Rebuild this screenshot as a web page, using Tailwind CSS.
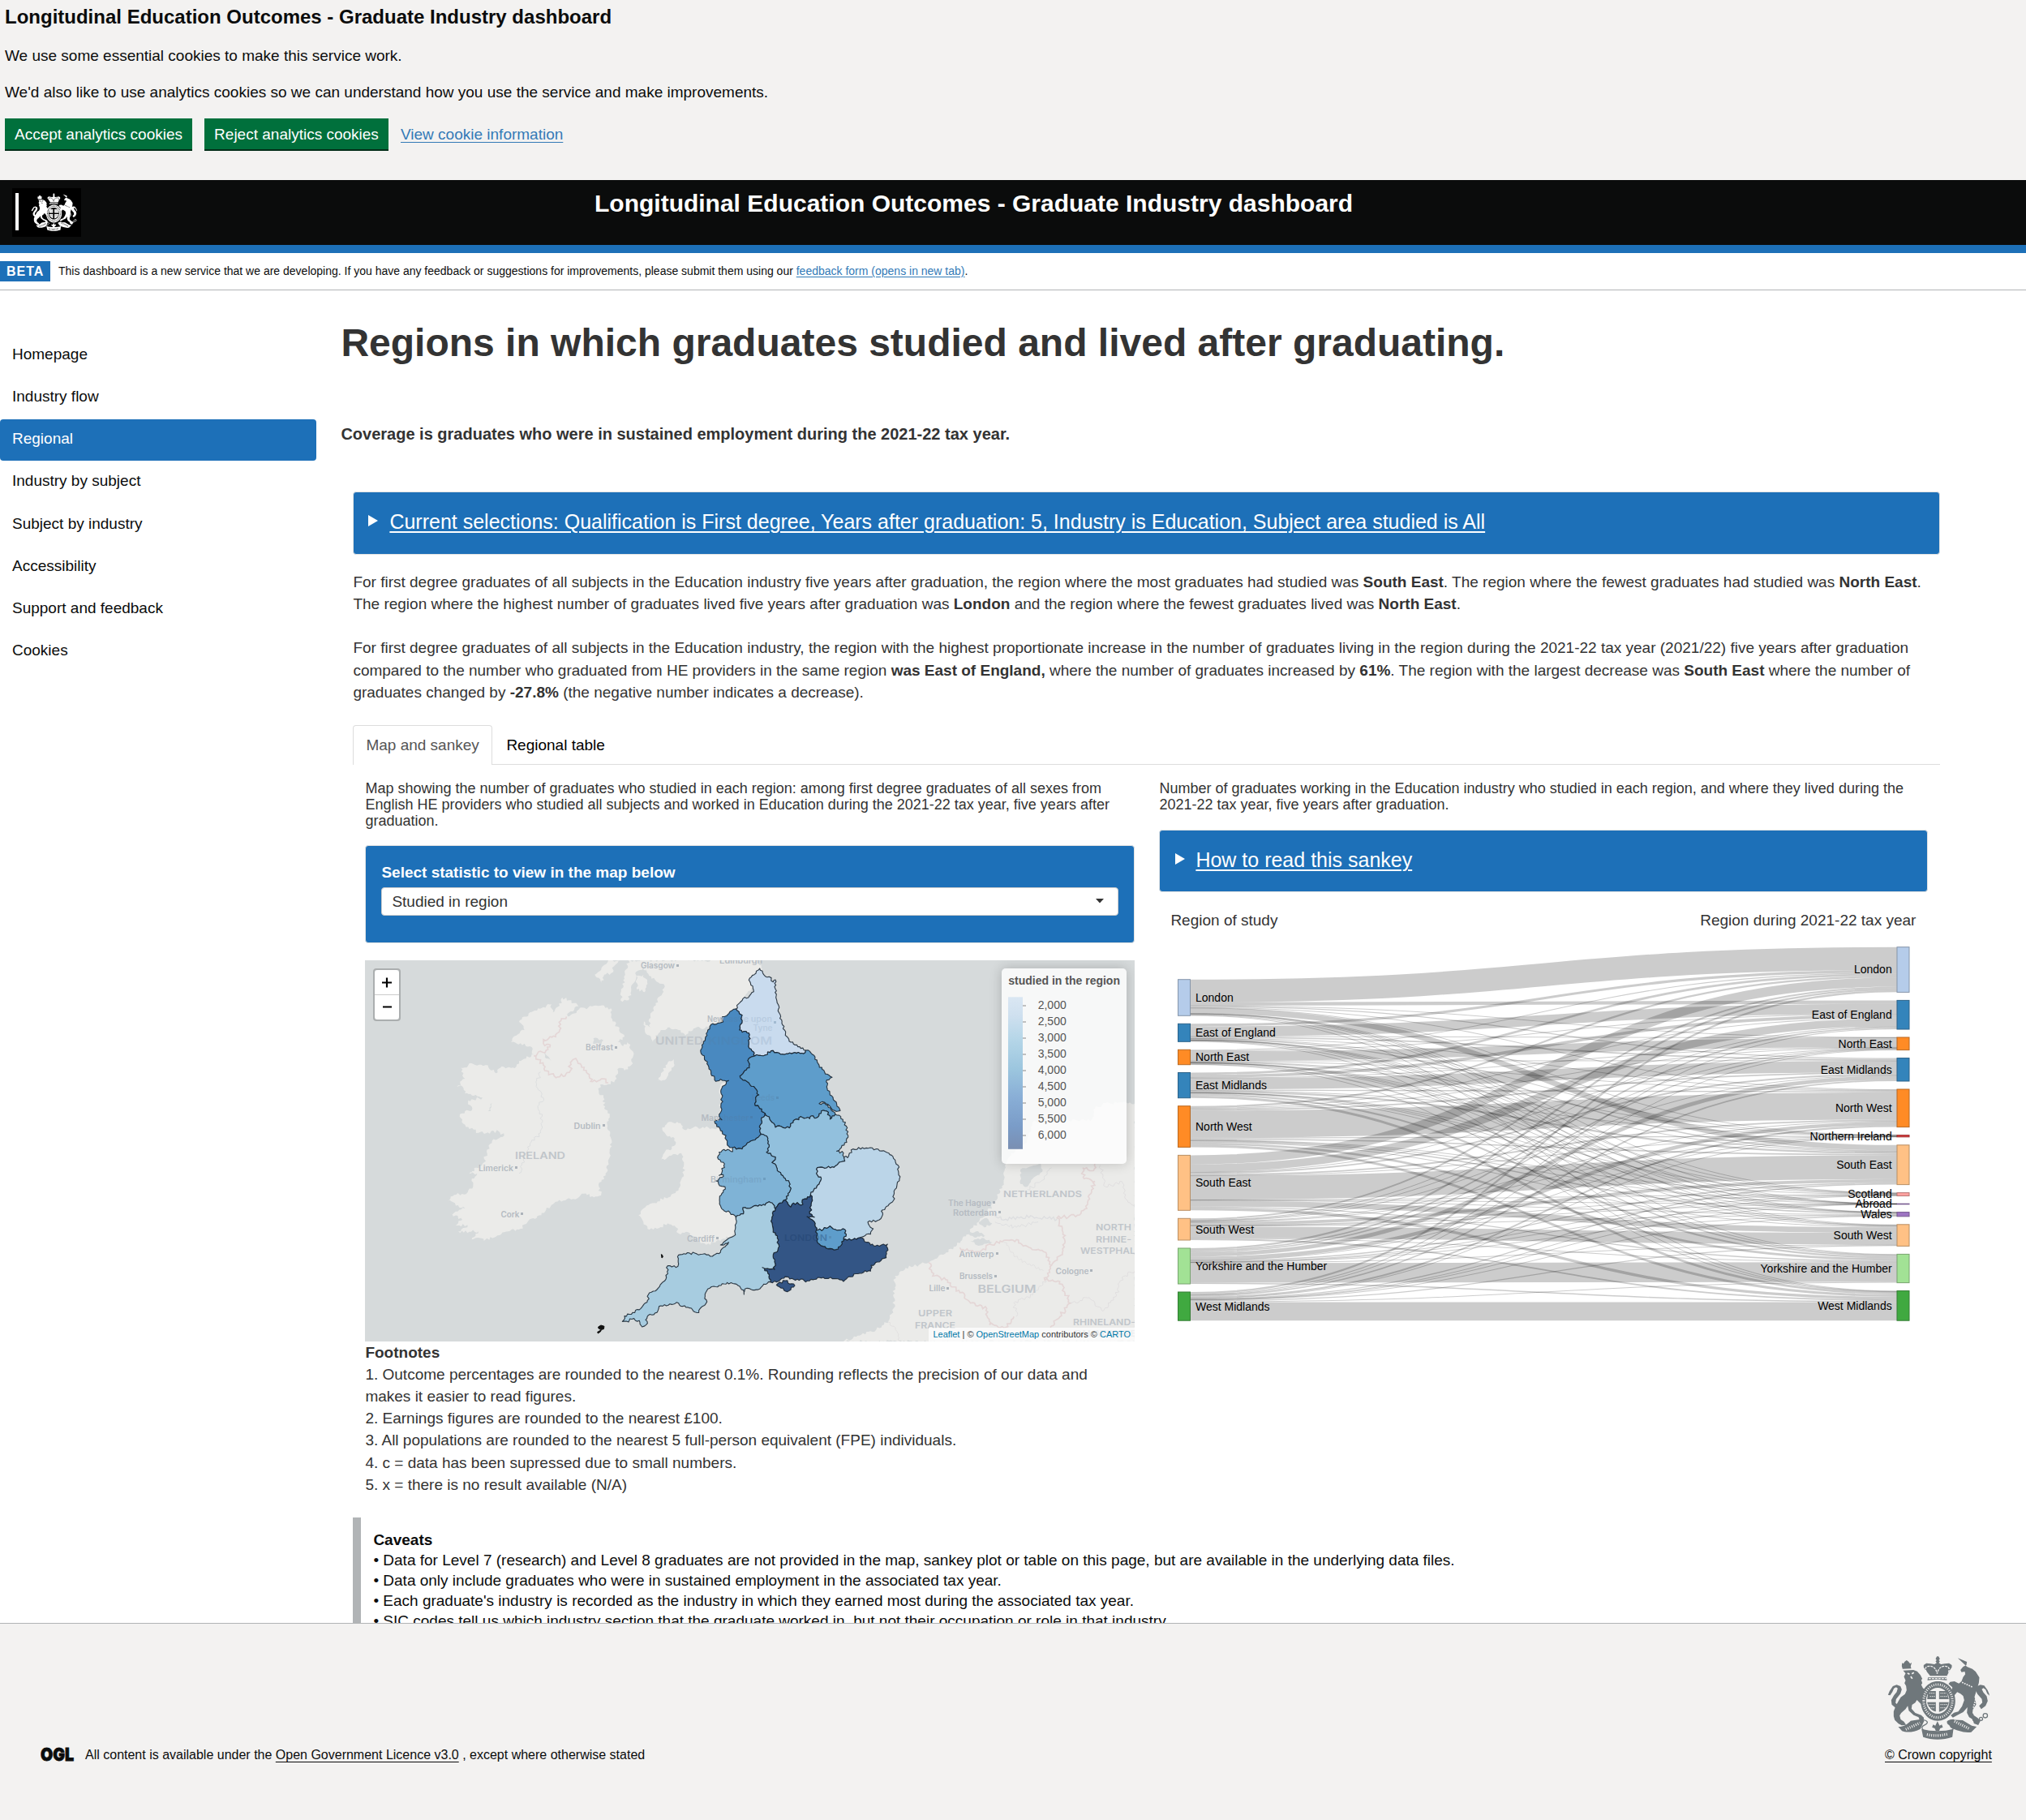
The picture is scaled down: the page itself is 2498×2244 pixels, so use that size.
<!DOCTYPE html>
<html lang="en">
<head>
<meta charset="utf-8">
<title>Longitudinal Education Outcomes - Graduate Industry dashboard</title>
<script src="https://cdn.jsdelivr.net/npm/@tailwindcss/browser@4"></script>
</head>
<body class="h-[2244px] w-[2498px] overflow-hidden bg-white font-['Liberation_Sans',Arial,sans-serif] text-[19px] leading-[27.14px] text-[#333]">

<svg class="hidden">
  <symbol id="crest" viewBox="232 122 380 312">
    <g fill="currentColor" stroke="none">
      <path d="M286 150l5 3 5-8 7-5 7 5 6 8 6-5-4 14 2 9-32 1-3-10zM290 178l38-2 14 5 12 14 7 14-4 4 4 12-4 6 6 12 10 8-2 14-12 8 2 14 8 14-6 8-10-10-12-12-6 10-12 8-2 14 14 16 22 8 10 10-2 12-14-4-4-10-18-8-18-16-4-18-8 12-16 14-6 10 4 14 12 8 8 12-16 2-12-6-14-14-4-14 0-18 8-20 10-18 8-14 16-12 6-14-2-16-6-10 4-10-6-14 6-12z"/>
      <path d="M234 268l6-14 12-18 14-5 14 5 5 12-5 16-16 20-2 14 10 8 12 6-4 8-18-4-14-12-2-16 10-18 10-12 4-14-6-4-8 4-6 14-8 12z"/>
      <path d="M374 178l-8-12 0-8 10-7 16 2 14 2 8-5-4-6 4-4-4-5 5-9h6l5 9-4 5 4 4-4 6 8 5 14-2 16-2 10 7 0 8-8 12-10 20h-62zM382 204h68l2 10-36-3-36 3z"/>
      <path d="M492 132l34 32 20 8 12 10 14 22-2 20-8 26-8 26 4 14 2 14-12 18-2 18 20 14 10 10-8 16-16-6-4-14-14-10-8-16 2-20-16 18-16 8-22 12-8-8 12-10 16-4 14-20 8-22-4-16-10-8-12-6-14 16-6-16 2-18-14-12 6-8 16-2 16 8 10-8 6-16 8-10-2-10-12 2-4-8 10-12 12-6 2-12z"/>
      <path d="M608 264l-6-14-12-16-14-3-14 6-5 12 8 16 16 18 2 14-12 12 8 12 16-12 8-18-4-18-12-14-6-12 6-4 8 6 6 14 8 8z"/>
      <path fill-rule="evenodd" d="M418 218c36 0 65 32 65 72s-29 74-65 74-63-34-63-74 27-72 63-72zm0 24c-24 0-43 21-43 47s19 49 43 49 43-23 43-49-19-47-43-47z"/>
      <path d="M383 254h28v30h-32zM423 254h28l8 30h-36zM379 295h32v35c-18-5-29-19-32-35zM423 295h36c-3 16-16 32-36 36z"/>
      <path d="M272 386c22 0 34-10 46-22l38-6 12 6-14 30c-24 14-54 14-68 8zM452 366l16-6 42 2 34 20 18 4-20 20c-26 4-54-6-76-16zM358 394c36 10 84 10 118 0l-4 30c-34 12-76 12-108 0z"/>
      <path d="M417 366l8 16 8-4 4 10-10 4-4 10h-12l-4-10-10-4 4-10 8 4z"/>
    </g>
    <g fill="none" stroke="currentColor" stroke-width="4">
      <path d="M356 360c24 0 30 12 16 18s-16 12-6 22M478 360c-26 0-30 12-16 18s16 12 10 22"/>
      <circle cx="542" cy="344" r="7"/><circle cx="554" cy="358" r="6"/><circle cx="578" cy="357" r="6"/><circle cx="594" cy="345" r="8"/>
    </g>
    <g fill="none" stroke="var(--gap,#f3f2f1)" stroke-width="4">
      <path d="M376 184q-10-22 12-22t28 28q6-28 28-28t14 22M384 208h66" stroke-dasharray="9 3"/>
      <path d="M366 290c0-33 22-60 52-60s54 27 54 60-24 62-54 62-52-29-52-62" stroke-width="9" stroke-dasharray="3 5"/>
      <path d="M300 396l52-24M378 415c28 6 54 4 76-2M480 366l56 28" stroke-width="10" stroke-dasharray="3 5"/>
      <path d="M387 262h22M389 274h20M428 262h22M428 274h26M384 304h24M387 316h20M428 304h26M428 316h20" stroke-width="3" stroke-dasharray="4 3"/>
      <path d="M508 222l40 18M560 276l-10 40" stroke-width="5" stroke-dasharray="5 4"/>
      <path d="M306 188l8 4M322 190l8-4M318 200l6 8" stroke-width="5"/>
    </g>
  </symbol>
</svg>

<section class="flex h-[222px] flex-col bg-[#f3f2f1] px-[6px] pt-[6px] leading-[25px] text-[#0b0c0c]">
  <h2 class="text-[24px] leading-[30px] font-bold">Longitudinal Education Outcomes - Graduate Industry dashboard</h2>
  <p class="mt-5">We use some essential cookies to make this service work.</p>
  <p class="mt-5">We'd also like to use analytics cookies so we can understand how you use the service and make improvements.</p>
  <div class="mt-5 flex gap-[15px]">
    <button class="h-10 w-[231px] border-b-2 border-[#002d18] bg-[#00703c] text-white">Accept analytics cookies</button>
    <button class="h-10 w-[227px] border-b-2 border-[#002d18] bg-[#00703c] text-white">Reject analytics cookies</button>
    <a class="pt-[7px] text-[#337ab7] underline decoration-1 underline-offset-[3px]">View cookie information</a>
  </div>
</section>

<header class="flex h-[90px] border-b-[10px] border-[#1d70b8] bg-[#0b0c0c] pt-[10px] pl-[15px]">
  <div class="flex h-[60px] w-[85px] bg-black pt-[6px] pl-[4px] text-white [--gap:#000]">
    <div class="h-[46px] w-[4px] bg-white"></div>
    <svg class="ml-[13px] h-[47px] w-[62px]" preserveAspectRatio="none" viewBox="0 0 62 47"><use href="#crest" width="62" height="47"/></svg>
  </div>
  <h1 class="-mt-px ml-[633px] text-[30px] leading-[40px] font-bold text-white">Longitudinal Education Outcomes - Graduate Industry dashboard</h1>
</header>

<div class="flex h-[46px] items-start border-b border-[#b1b4b6] pt-[10px] text-[14px] leading-[25px] text-[#0b0c0c]">
  <strong class="h-[25px] w-[62px] bg-[#1d70b8] pl-[8px] text-[16px] tracking-[1px] text-white">BETA</strong>
  <p class="ml-[10px]">This dashboard is a new service that we are developing. If you have any feedback or suggestions for improvements, please submit them using our <a class="text-[#337ab7] underline underline-offset-2">feedback form (opens in new tab)</a>.</p>
</div>

<div class="flex h-[1643px] overflow-hidden">
  <nav class="mt-[55px] flex w-[390px] shrink-0 flex-col gap-[1.14px] text-[#0b0c0c]">
    <a class="h-[51px] px-[15px] pt-[10px]">Homepage</a>
    <a class="h-[51px] px-[15px] pt-[10px]">Industry flow</a>
    <a class="h-[51px] rounded bg-[#1d70b8] px-[15px] pt-[10px] text-white">Regional</a>
    <a class="h-[51px] px-[15px] pt-[10px]">Industry by subject</a>
    <a class="h-[51px] px-[15px] pt-[10px]">Subject by industry</a>
    <a class="h-[51px] px-[15px] pt-[10px]">Accessibility</a>
    <a class="h-[51px] px-[15px] pt-[10px]">Support and feedback</a>
    <a class="h-[51px] px-[15px] pt-[10px]">Cookies</a>
  </nav>

  <main class="ml-[30.4px] flex w-[1986px] shrink-0 flex-col pt-[38px]">
    <h1 class="text-[48px] leading-[53px] font-bold">Regions in which graduates studied and lived after graduating.</h1>
    <p class="mt-[73px] text-[20px] leading-[27px] font-bold">Coverage is graduates who were in sustained employment during the 2021-22 tax year.</p>

    <div class="mt-[57px] ml-[15px] flex w-[1957px] flex-col">
      <div class="flex h-[78px] rounded border border-[#e3e3e3] bg-[#1d70b8] pt-[19px] pl-[18px] text-white">
        <svg class="mt-[9px] h-[14px] w-[13px]" viewBox="0 0 13 14"><path d="M0 0L12 7L0 14Z" fill="#fff"/></svg>
        <span class="ml-[13px] text-[25px] leading-[34px] underline decoration-2 underline-offset-[3px]">Current selections: Qualification is First degree, Years after graduation: 5, Industry is Education, Subject area studied is All</span>
      </div>
      <p class="mt-5">For first degree graduates of all subjects in the Education industry five years after graduation, the region where the most graduates had studied was <b>South East</b>. The region where the fewest graduates had studied was <b>North East</b>.<br>The region where the highest number of graduates lived five years after graduation was <b>London</b> and the region where the fewest graduates lived was <b>North East</b>.<br><br>For first degree graduates of all subjects in the Education industry, the region with the highest proportionate increase in the number of graduates living in the region during the 2021-22 tax year (2021/22) five years after graduation<br>compared to the number who graduated from HE providers in the same region <b>was East of England,</b> where the number of graduates increased by <b>61%</b>. The region with the largest decrease was <b>South East</b> where the number of<br>graduates changed by <b>-27.8%</b> (the negative number indicates a decrease).</p>

      <div class="mt-[27px] flex h-[49px] shrink-0 border-b border-[#ddd]">
        <div class="-mb-px w-[172px] rounded-t border border-b-0 border-[#ddd] bg-white pt-[10px] pl-[15px] text-[#555]">Map and sankey</div>
        <div class="pt-[11px] pl-[17px] text-black">Regional table</div>
      </div>

      <div class="flex gap-[30px] pt-[19px] pl-[15px]">
        <section class="w-[949px] shrink-0">
          <p class="text-[18px] leading-5">Map showing the number of graduates who studied in each region: among first degree graduates of all sexes from<br>English HE providers who studied all subjects and worked in Education during the 2021-22 tax year, five years after<br>graduation.</p>
          <div class="mt-5 h-[121px] rounded border border-[#e3e3e3] bg-[#1d70b8] px-[19px] pt-[19px]">
            <label class="block leading-[27px] font-bold text-white">Select statistic to view in the map below</label>
            <div class="mt-[5px] flex h-[35px] items-center justify-between rounded border border-[#ccc] bg-white pr-[17px] pl-[12px]">
              <span>Studied in region</span>
              <svg class="h-[6px] w-[10px]" viewBox="0 0 10 6"><path d="M0 0H10L5 5.5Z" fill="#333"/></svg>
            </div>
          </div>

          <div class="relative mt-[21px] h-[470px] w-[949px] overflow-hidden bg-[#d6dadb]">
            <svg class="block h-[470px] w-[949px]" viewBox="0 0 949 470" id="map">
              <g id="land" transform="translate(-10 -14) scale(.33333)"></g>
              <g id="england" transform="translate(450 -14) scale(.33333)"></g>
              <g id="places" font-family="Inter, sans-serif"></g>
            </svg>
            <div class="absolute top-[10px] left-[10px] h-[65px] w-[34px] rounded border-2 border-black/20 bg-clip-padding">
              <div class="flex h-[61px] flex-col rounded-sm bg-white">
                <svg viewBox="0 0 30 61" class="h-[61px] w-[30px]"><path d="M9 15.5H21M15 9.5V21.5M10 45.5H21" stroke="#000" stroke-width="2.2"/><path d="M0 30.5H30" stroke="#ccc"/></svg>
              </div>
            </div>
            <div class="absolute top-[10px] right-[10px] h-[241px] w-[154px] rounded-[5px] bg-white/80 shadow-[0_0_15px_rgba(0,0,0,0.2)]">
              <svg viewBox="0 0 154 241" class="h-[241px] w-[154px]" font-family="Liberation Sans, Arial, sans-serif" font-size="14" fill="#555">
                <defs><linearGradient id="scale" x2="0" y2="1"><stop offset="0" stop-color="#dae7f3"/><stop offset=".12" stop-color="#cfe0ef"/><stop offset=".28" stop-color="#b5d6e8"/><stop offset=".48" stop-color="#9bc5de"/><stop offset=".66" stop-color="#89aed6"/><stop offset=".85" stop-color="#7a9cc8"/><stop offset="1" stop-color="#7a8fb2"/></linearGradient></defs>
                <text x="8.3" y="20" font-weight="bold">studied in the region</text>
                <rect x="8" y="35.3" width="18" height="187.5" fill="url(#scale)"/>
                <g id="ticks"></g>
              </svg>
            </div>
            <div class="absolute right-0 bottom-0 h-[17px] w-[254px] bg-white/70 pl-[5px] text-[11px] leading-[16.5px] whitespace-nowrap text-[#333]"><a class="text-[#0078a8]">Leaflet</a> | © <a class="text-[#0078a8]">OpenStreetMap</a> contributors © <a class="text-[#0078a8]">CARTO</a></div>
          </div>
          <p><b>Footnotes</b><br>1. Outcome percentages are rounded to the nearest 0.1%. Rounding reflects the precision of our data and<br>makes it easier to read figures.<br>2. Earnings figures are rounded to the nearest £100.<br>3. All populations are rounded to the nearest 5 full-person equivalent (FPE) individuals.<br>4. c = data has been supressed due to small numbers.<br>5. x = there is no result available (N/A)</p>
        </section>

        <section class="w-[948px] shrink-0">
          <p class="text-[18px] leading-5">Number of graduates working in the Education industry who studied in each region, and where they lived during the<br>2021-22 tax year, five years after graduation.</p>
          <div class="mt-[21px] flex h-[77px] rounded border border-[#e3e3e3] bg-[#1d70b8] pt-[19px] pl-[19px] text-white">
            <svg class="mt-[9px] h-[14px] w-[12px]" viewBox="0 0 12 14"><path d="M0 0L12 7L0 14Z" fill="#fff"/></svg>
            <span class="ml-[13px] text-[25px] leading-[34px] underline decoration-2 underline-offset-[3px]">How to read this sankey</span>
          </div>
          <div class="mt-[21px] flex justify-between pr-[15px] pl-[14px]"><span>Region of study</span><span>Region during 2021-22 tax year</span></div>
          <svg id="sankey" class="mt-[12px] block h-[480px] w-[948px]" viewBox="1429 1160 948 480" font-family="Liberation Sans, Arial, sans-serif" font-size="14"></svg>
        </section>
      </div>

      <div class="mt-[27px] h-[200px] shrink-0 border-l-[10px] border-[#b1b4b6] pt-[15px] pl-[15px] leading-[25px] text-[#0b0c0c]">
        <b>Caveats</b><br>• Data for Level 7 (research) and Level 8 graduates are not provided in the map, sankey plot or table on this page, but are available in the underlying data files.<br>• Data only include graduates who were in sustained employment in the associated tax year.<br>• Each graduate's industry is recorded as the industry in which they earned most during the associated tax year.<br>• SIC codes tell us which industry section that the graduate worked in, but not their occupation or role in that industry.
      </div>
    </div>
  </main>
</div>

<footer class="flex h-[243px] justify-between border-t border-[#b1b4b6] bg-[#f3f2f1] pr-[42px] pl-[50px] text-[16px] leading-5 text-[#0b0c0c]">
  <div class="flex h-5 pt-[152px]">
    <svg class="h-[20px] w-[42px] shrink-0" viewBox="0 0 42 20"><text x="0" y="17" font-family="Inter, sans-serif" font-weight="900" font-size="22" textLength="41" lengthAdjust="spacingAndGlyphs" fill="#0b0c0c" stroke="#0b0c0c" stroke-width=".8">OGL</text></svg>
    <p class="ml-[13px] whitespace-nowrap">All content is available under the <a class="underline decoration-1 underline-offset-[3px]">Open Government Licence v3.0</a> , except where otherwise stated</p>
  </div>
  <div class="flex w-[132px] flex-col pt-[39px]">
    <svg class="ml-[3px] h-[104px] w-[127px] text-[#6f777b]"><use href="#crest" width="127" height="104"/></svg>
    <a class="mt-[9px] whitespace-nowrap underline decoration-1 underline-offset-[3px]">© Crown copyright</a>
  </div>
</footer>

<script>
const NS = 'http://www.w3.org/2000/svg';
function add(parent, tag, attrs, text) {
  const e = document.createElementNS(NS, tag);
  for (const k in attrs) e.setAttribute(k, attrs[k]);
  if (text) e.textContent = text;
  parent.appendChild(e);
  return e;
}
const $ = id => document.getElementById(id);
const parse = s => s.trim().split(/\s+/).map(p => p.split(',').map(Number));

// Roughens an edge; the same two endpoints always give the same line, so neighbours share borders.
function rough(a, b, amp) {
  const fwd = a[0] < b[0] || (a[0] === b[0] && a[1] < b[1]);
  const [p, q] = fwd ? [a, b] : [b, a];
  const len = Math.hypot(q[0] - p[0], q[1] - p[1]);
  const n = Math.max(1, Math.round(len / 7));
  let seed = Math.abs(p[0] * 73.1 + p[1] * 19.7 + q[0] * 31.3 + q[1] * 57.9) + 1;
  const pts = [];
  for (let i = 1; i < n; i++) {
    seed = (seed * 9301 + 49297) % 233280;
    const j = (seed / 233280 - .5) * amp;
    const t = i / n;
    pts.push([p[0] + (q[0] - p[0]) * t - (q[1] - p[1]) / len * j, p[1] + (q[1] - p[1]) * t + (q[0] - p[0]) / len * j]);
  }
  return fwd ? pts : pts.reverse();
}
function shape(s, amp, open) {
  const pts = parse(s), out = [];
  pts.forEach((p, i) => {
    out.push(p);
    if (!open || i < pts.length - 1) out.push(...rough(p, pts[(i + 1) % pts.length], amp));
  });
  return 'M' + out.map(p => p.map(v => v.toFixed(1)).join(' ')).join('L') + (open ? '' : 'Z');
}

const land = [
 '760,180 785,190 820,212 785,235 780,250 820,225 870,212 900,210 940,220 945,260 970,300 990,325 965,345 985,360 1000,345 1022,380 1015,430 990,450 970,440 955,485 930,500 900,502 895,525 912,550 915,590 935,610 925,640 935,690 943,730 930,790 920,830 895,880 903,912 870,915 840,905 800,925 735,935 700,965 665,995 635,1005 605,1035 560,1045 520,1060 470,1080 460,1070 425,1075 450,1045 375,1045 420,1020 365,1022 390,1002 345,980 400,960 335,932 360,910 410,900 430,880 425,850 445,830 415,830 470,790 480,750 500,710 545,690 525,675 450,680 400,650 380,620 400,600 425,598 412,560 465,550 400,535 385,505 370,510 400,480 385,440 430,425 475,430 515,460 530,440 590,435 600,415 655,390 640,360 570,345 590,320 620,300 600,270 640,235 690,215 720,205 725,235 750,210',
 '930,42 905,70 880,95 905,125 915,95 940,90 955,60 975,42',
 '1005,42 990,110 975,190 1005,190 1020,130 1040,80 1060,70 1090,110 1135,130 1130,165 1105,200 1080,260 1085,290 1062,268 1065,300 1095,345 1105,320 1150,290 1190,300 1215,320 1245,295 1300,290 1400,240 1500,75 1485,42',
 '1035,100 1060,95 1075,130 1065,160 1035,150',
 '1172,408 1175,430 1145,480 1112,490 1130,455 1150,420',
 '1375,710 1340,665 1300,660 1245,660 1210,668 1205,655 1185,640 1155,640 1130,660 1145,690 1175,700 1180,715 1165,740 1140,750 1118,782 1150,770 1200,755 1210,790 1210,840 1195,880 1170,905 1100,940 1060,960 1042,985 1060,1010 1075,1035 1110,1035 1150,1015 1180,1030 1190,1052 1225,1048 1260,1080 1300,1090 1345,1080 1400,1055 1402,993 1440,850 1430,740',
 '1345,505 1365,495 1375,640 1335,632 1345,600',
 '2880,570 2770,570 2730,590 2720,630 2500,640 2470,720 2420,755 2400,795 2395,850 2365,930 2320,990 2280,1030 2240,1070 2220,1095 2150,1140 2115,1160 2030,1180 1990,1210 1985,1330 1970,1370 1940,1400 1860,1430 1800,1452 2880,1452'
];
land.forEach(s => add($('land'), 'path', {d: shape(s, 12), fill: '#ebebe9'}));
// lakes, estuaries
['2455,815 2530,795 2535,825 2500,850 2480,880 2455,870', '2300,1010 2330,995 2350,1015 2320,1030', '2250,1050 2290,1045 2330,1060 2290,1068', '2270,1080 2320,1070 2350,1085 2300,1098', '875,330 912,338 905,350 875,352', '695,380 720,415 700,405', '485,600 500,570 495,600']
 .forEach(s => add($('land'), 'path', {d: shape(s, 8), fill: '#d6dadb'}));
const lines = [
 ['775,250 755,265 750,300 735,325 690,335 690,350 715,355 700,375 655,395 690,430 695,450 730,470 770,470 790,450 790,420 810,405 830,430 860,465 865,490 905,480 930,495', '#e4d6d6', 5],
 ['2730,795 2725,820 2685,810 2690,850 2730,860 2705,930 2700,960 2665,985 2590,995 2620,1060 2610,1130 2570,1170 2540,1120 2480,1100 2440,1075 2380,1080 2350,1095 2290,1120 2230,1105', '#e4d6d6', 5],
 ['2115,1160 2130,1210 2185,1225 2200,1250 2240,1270 2270,1310 2330,1330 2340,1390 2400,1400 2430,1360', '#e4d6d6', 5],
 ['2570,1170 2545,1225 2600,1230 2640,1310 2590,1370 2565,1400', '#e4d6d6', 5],
 ['680,455 665,500 690,550 670,590 685,620 680,680 640,720 610,800 600,830', '#dcdedf', 3],
 ['2340,980 2400,1000 2500,990 2590,1000', '#dddee0', 4],
 ['2360,1010 2440,1030 2520,1010', '#dddee0', 3],
 ['2750,800 2770,880 2830,860 2850,930 2878,950', '#e0dedf', 3],
 ['2480,890 2530,860 2570,810', '#dedfe0', 3],
 ['2440,1360 2430,1310 2500,1280 2550,1225', '#e0dfe0', 3],
 ['2640,1310 2710,1290 2760,1340 2810,1280 2830,1215 2878,1190', '#e0dedf', 3],
 ['1965,1380 2000,1420 2010,1450', '#e2e0e0', 3],
 ['2390,1080 2450,1150 2540,1190', '#e2e1e1', 3]
];
lines.forEach(([s, c, w]) => add($('land'), 'path', {d: shape(s, 14, true), fill: 'none', stroke: c, 'stroke-width': w}));

// England: borders used by more than one region
const B = {
 neNw: '22,222 35,240 45,245 45,265 38,280 35,300 45,308 60,305 72,318 70,345 72,368 90,385 92,396',
 neYh: '92,396 132,392 152,377 172,383 188,390 215,388 240,383 272,388 280,375',
 nwYh: '92,396 70,405 72,440 55,450 37,470 48,485 70,495 98,520 107,540 95,550 92,572 110,590 130,608',
 nwEm: '130,608 117,625 113,650 115,685',
 nwWm: '115,685 85,708 60,725 45,740 10,735',
 yhEm: '130,608 150,635 168,660 190,657 220,662 235,635 255,632 262,620 295,628 300,618 320,625 330,610 345,597 358,600 370,630 378,618 390,612',
 emWm: '115,685 140,700 145,725 135,752 168,770 155,790 170,800 175,820 205,850 222,870 220,900 205,928',
 emSe: '205,928 215,945 225,955 235,940 270,945 268,928 285,925 298,910',
 emEe: '425,785 400,795 385,808 330,808 320,815 325,838 338,850 330,870 320,885 300,900 298,910',
 wmSe: '205,928 185,940 168,962',
 wmSw: '22,993 50,980 48,957 70,960 90,950 130,948 145,935 160,945 168,962',
 seSw: '168,962 160,970 155,1000 160,1040 175,1070 182,1100 175,1120 160,1130 165,1185 120,1178 140,1200 150,1232',
 seEe: '298,910 305,930 300,950 295,980 312,992 285,990 300,1000 315,1015 320,1040',
 loEe: '320,1040 345,1038 370,1025 390,1038 425,1038 430,1055 420,1073',
 loSe: '320,1040 322,1080 345,1100 370,1108 400,1110 415,1090 420,1073',
 eeSe: '420,1073 455,1075 480,1068'
};
const rev = s => s.split(' ').reverse().join(' ');
const join = (...a) => a.join(' ').split(' ').filter((p, i, l) => p !== l[i - 1]).join(' ');
const regions = [
 ['#c9dbee', join('110,72 125,95 145,103 160,122 168,114 165,140 172,155 170,180 178,205 178,230 188,250 192,275 202,300 205,320 225,345 240,355 262,368 280,375', rev(B.neYh), rev(B.neNw), '40,195 48,184 68,180 88,158 85,145 70,115 90,95')],
 ['#4989c0', join(B.neNw, B.nwYh, B.nwEm, B.nwWm, '0,735 -18,700 -15,690 -35,672 -55,645 -55,632 -30,632 -40,612 -32,600 -30,515 -20,505 -5,487 -35,482 -52,490 -70,455 -85,425 -95,395 -108,382 -98,350 -85,320 -82,300 -70,280 -25,270 -30,258 0,232')],
 ['#5e9dcb', join(rev(B.neYh), B.nwYh, B.yhEm, '372,588 350,570 330,572 342,565 355,572 375,590 400,600 408,598 395,575 370,540 358,510 358,485 378,475 350,455 330,430 315,400 300,385')],
 ['#92c0dd', join(B.yhEm, '410,620 430,655 437,690 432,715 412,735 395,748 420,755', B.emEe, rev(B.emSe), rev(B.emWm), rev(B.nwEm))],
 ['#7fb3d6', join(rev(B.nwWm), B.emWm, B.wmSe, rev(B.wmSw), '0,975 -20,970 -35,950 -38,915 -25,900 -18,880 -30,878 -52,858 -30,845 -25,835 -40,838 -28,820 -20,795 -43,778 -40,752 -22,742 10,750')],
 ['#bbd5e8', join(rev(B.seEe), rev(B.emEe), '422,770 435,772 440,762 455,740 490,735 540,740 575,750 605,775 622,800 627,850 610,890 605,930 585,950 560,970 562,990 545,1005 510,1010 520,1030 530,1035 520,1055 480,1068', rev(B.eeSe), rev(B.loEe))],
 ['#335585', join(B.emSe, B.seEe, B.loSe, B.eeSe, '505,1085 520,1095 545,1096 583,1092 578,1142 545,1158 522,1170 520,1192 500,1190 480,1200 440,1212 420,1230 385,1220 345,1215 300,1222 280,1232 270,1222 235,1222 210,1213 200,1218 172,1232 150,1232', rev(B.seSw), rev(B.wmSe))],
 ['#335585', '172,1243 205,1227 240,1245 212,1268'],
 ['#5e9dcb', join(B.loEe, rev(B.loSe))],
 ['#a7cce0', join(B.wmSw, B.seSw, '125,1240 110,1258 85,1262 55,1258 52,1278 50,1262 30,1245 -10,1234 -40,1245 -60,1248 -82,1258 -92,1285 -85,1305 -102,1322 -115,1345 -135,1340 -150,1328 -175,1322 -190,1310 -215,1315 -262,1322 -270,1345 -302,1355 -312,1372 -305,1385 -325,1398 -335,1375 -370,1368 -375,1380 -398,1378 -390,1358 -360,1345 -330,1330 -305,1300 -298,1272 -270,1260 -235,1215 -230,1172 -200,1178 -190,1165 -190,1132 -130,1125 -65,1137 -35,1122 -25,1105 -5,1085 -35,1095 20,1058')]
];
regions.forEach(([c, s]) => add($('england'), 'path', {d: shape(s, 9), fill: c, stroke: '#14202c', 'stroke-width': 3.4, 'stroke-linejoin': 'round', 'stroke-opacity': .85}));
add($('england'), 'path', {d: 'M-487 1398l10-6 12 4-2 10-8 2-4 8-9 6-2-5 9-5 3-6-8-2zM-254 1130l4 2 2 8-4 3z', fill: '#111', stroke: '#111', 'stroke-width': 3});

// place names: text, left x, baseline, width, size, opacity
const P = $('places');
[['Glasgow',340,10,42,10,1],['Edinburgh',437,4,53,10,1],['Belfast',272,111,34,10,1],['Dublin',257.5,207.5,33,10,1],['Limerick',140,259.5,43,10,1],['Cork',167.5,316.5,23,10,1],['Cardiff',397,347,34,10,1],
 ['New',422,76,20,10,1],['castle upon',442,76,60,10,.15],['Tyne',478.5,86.5,24,10,.15],['Leeds',477,173,28,10,.2],['Man',414.5,197.5,22,10,1],['chester',436.5,197.5,37,10,.2],['B',426,273.5,7,10,1],['irmingham',433,273.5,56,10,.2],
 ['The Hague',719,303,53,10,1],['Rotterdam',725,314.5,54,10,1],['Antwerp',732.5,366,43,10,1],['Brussels',733,393,41,10,1],['Lille',695.5,408,20,10,1],['Cologne',851.5,386.5,41,10,1]]
 .forEach(([t, x, y, w, f, o]) => add(P, 'text', {x, y, textLength: w, lengthAdjust: 'spacingAndGlyphs', 'font-size': f, 'font-weight': 600, fill: o < 1 ? '#5a7796' : '#b5bbc2', opacity: o}, t));
[['UNITED',358,103.5,59,13,1],['KINGDOM',423,103.5,79,13,.15],['IRELAND',185,244.5,62,12,1],['NETHERLANDS',787,291.5,97,11,1],['BELGIUM',755.5,409.5,72,13,1],['NORTH',901,333,44,11,1],['RHINE-',901,347.5,44,11,1],['WESTPHALIA',882,362,80,11,1],['UPPER',682,439,42,11,1],['FRANCE',678,453.5,50,11,1],['RHINELAND-',873,449.5,77,11,1],['PALATINATE',875,464,76,11,1],['LONDON',517,345.5,53,11,.35]]
 .forEach(([t, x, y, w, f, o]) => add(P, 'text', {x, y, textLength: w, lengthAdjust: 'spacingAndGlyphs', 'font-size': f, 'font-weight': 600, fill: o < 1 ? (t === 'LONDON' ? '#1b3c6b' : '#5a7796') : '#c0c5ca', opacity: o}, t));
[[384,5],[308,106],[293,202],[185,254],[192,311],[433,341],[774,297],[781,309],[778,360],[776,388],[717,403],[894,381]].forEach(([x, y]) => add(P, 'rect', {x, y, width: 3, height: 3, fill: '#acb3ba'}));
[[504,75],[507,168],[475,192],[491,268],[572,340]].forEach(([x, y]) => add(P, 'rect', {x, y, width: 3, height: 3, fill: '#4a6c90', opacity: .3}));

['2,000','2,500','3,000','3,500','4,000','4,500','5,000','5,500','6,000'].forEach((t, i) => {
  add($('ticks'), 'path', {d: `M26 ${46 + 20 * i}h4`, stroke: '#888'});
  add($('ticks'), 'text', {x: 44.7, y: 50 + 20 * i}, t);
});

// Sankey
const blue = '#aec7e8', navy = '#1f77b4', orange = '#ff7f0e', peach = '#ffbb78', lime = '#98df8a', green = '#2ca02c';
const left = [['London',1207.7,1252.3,blue],['East of England',1262.3,1284.3,navy],['North East',1294.3,1312.7,orange],['East Midlands',1322.5,1353.7,navy],['North West',1363.7,1414.4,orange],['South East',1424.4,1492.3,peach],['South West',1502.3,1529,peach],['Yorkshire and the Humber',1539,1583,lime],['West Midlands',1593,1628.2,green]];
const right = [['London',1167.7,1223.4,blue],['East of England',1233.4,1269,navy],['North East',1279,1294.6,orange],['East Midlands',1304.6,1333,navy],['North West',1343,1389.6,orange],['Northern Ireland',1399.6,1401.8,'#d62728'],['South East',1411.8,1460.6,peach],['Scotland',1470.6,1474.5,'#ff9896'],['Abroad',1484.2,1484.8,'#9467bd'],['Wales',1494.6,1499.8,'#9467bd'],['South West',1509.8,1536.4,peach],['Yorkshire and the Humber',1546.4,1581.6,lime],['West Midlands',1591.6,1628.2,green]];
const flow = [
 [27.5,4,.3,1.3,1.2,.1,7.5,.3,.1,.3,.9,.7,.6],
 [3,12.3,.3,1.7,.7,.05,1.7,.2,.05,.2,.6,.7,.5],
 [1,.7,12,.5,1,.1,.6,.5,.05,.1,.2,1.5,.3],
 [2.7,3.6,.4,14,1.6,.1,2.5,.2,.05,.3,1,2.3,3],
 [2,.9,.6,1.5,35,.9,1.6,.5,.1,1.6,.9,2.5,2.7],
 [10.3,8.7,.4,1.8,2,.1,31,.4,.1,.8,7,1.3,3.3],
 [1.8,.8,.2,.6,1,.1,4,.2,.1,1,14.5,.6,1.8],
 [2.2,1.6,1.6,4.7,5,.1,1.6,.5,.1,.4,.6,24,1.4],
 [2.2,1.1,.3,1.7,2.3,.1,1.5,.2,.1,.8,1.3,1,22.3]
];
for (let k = 0; k < 6; k++) {
  right.forEach((r, j) => { const s = flow.reduce((a, f) => a + f[j], 0); flow.forEach(f => f[j] *= (r[2] - r[1]) / s); });
  left.forEach((l, i) => { const s = flow[i].reduce((a, b) => a + b, 0); flow[i] = flow[i].map(v => v * (l[2] - l[1]) / s); });
}
const S = $('sankey'), ry = right.map(r => r[1]);
left.forEach((l, i) => {
  let y = l[1];
  right.forEach((r, j) => {
    const h = flow[i][j], a = y + h / 2, b = ry[j] + h / 2;
    y += h; ry[j] += h;
    add(S, 'path', {d: `M1468 ${a}C1903.5 ${a} 1903.5 ${b} 2339 ${b}`, fill: 'none', stroke: '#000', 'stroke-opacity': .2, 'stroke-width': Math.max(1, h)});
  });
});
const darker = {'#aec7e8':'#7a8ba2','#1f77b4':'#16537e','#ff7f0e':'#b3590a','#ffbb78':'#b38354','#98df8a':'#6a9c61','#2ca02c':'#1f701f','#d62728':'#961b1c','#ff9896':'#b36a69','#9467bd':'#684884'};
[[left, 1452.5, 1474, 'start'], [right, 2339, 2332.7, 'end']].forEach(([nodes, x, tx, anchor]) => nodes.forEach(n => {
  add(S, 'rect', {x, y: n[1], width: 15, height: n[2] - n[1], fill: n[3], stroke: darker[n[3]], opacity: .9});
  add(S, 'text', {x: tx, y: (n[1] + n[2]) / 2 + 4.9, 'text-anchor': anchor, fill: '#000'}, n[0]);
}));
</script>
</body>
</html>
